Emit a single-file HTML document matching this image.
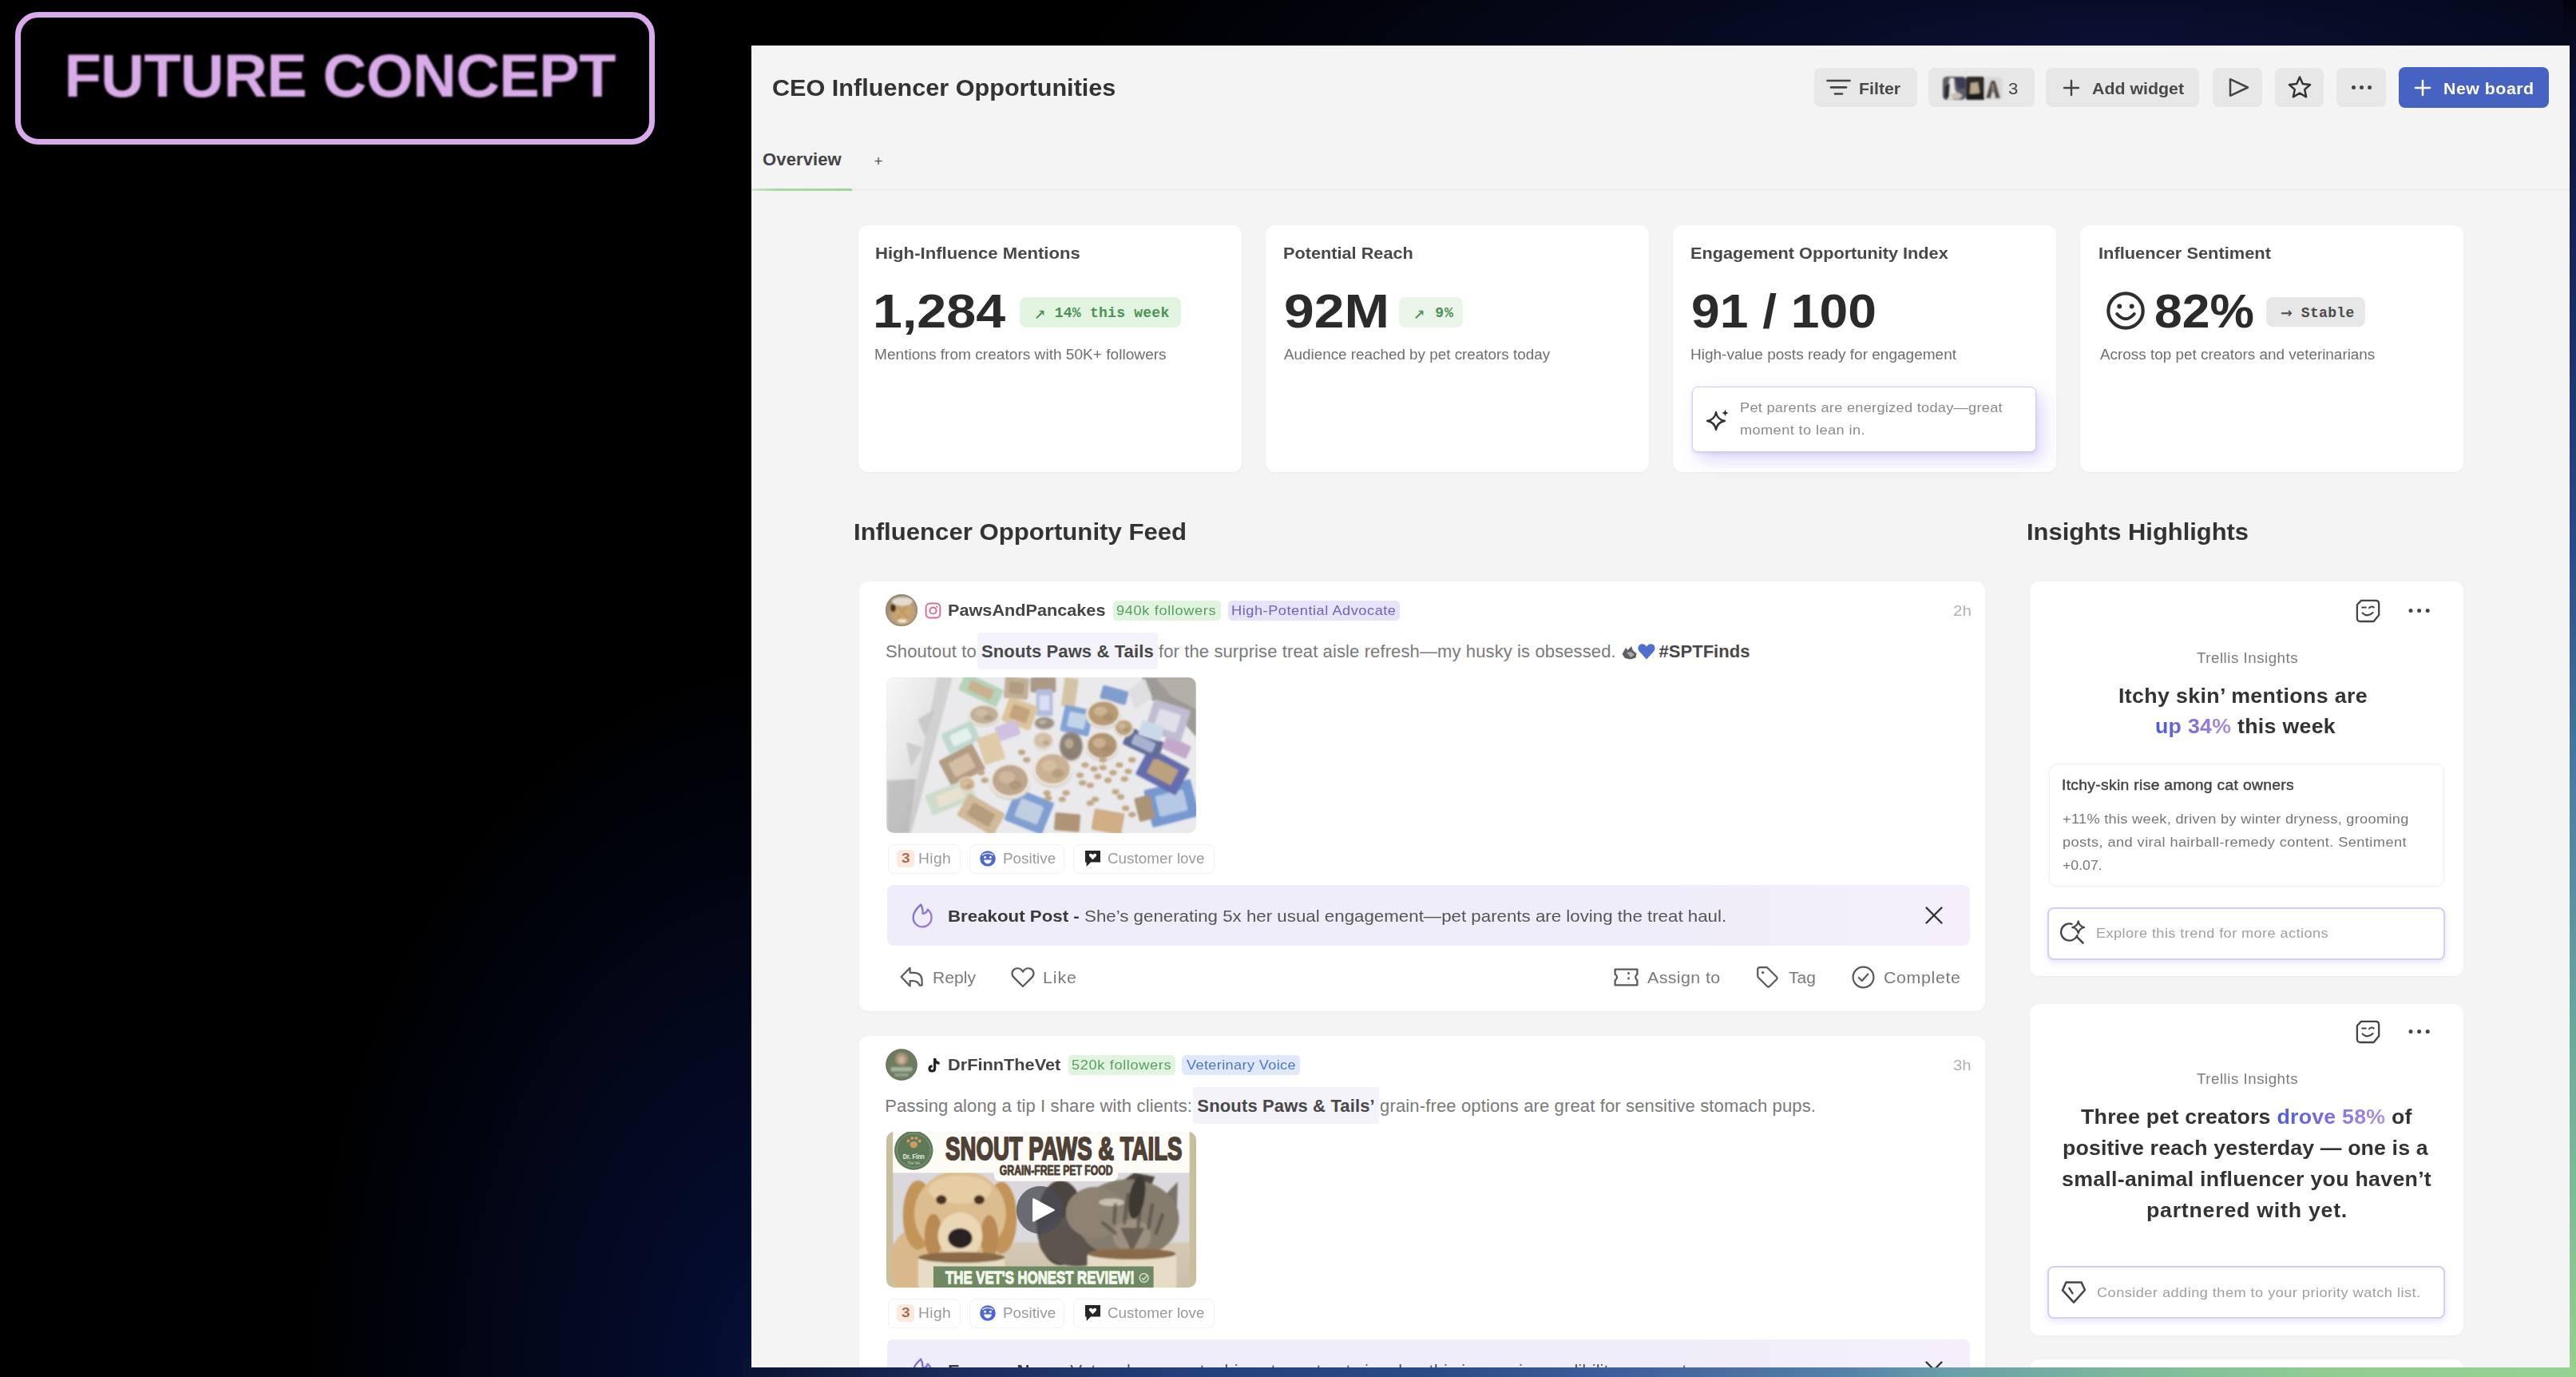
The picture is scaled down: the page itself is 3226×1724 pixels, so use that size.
<!DOCTYPE html>
<html lang="en"><head><meta charset="utf-8"><title>CEO Influencer Opportunities</title>
<style>
html,body{margin:0;padding:0;background:#000;}
html{width:3226px;height:1724px;overflow:hidden;}
body{width:3226px;height:1724px;position:relative;overflow:hidden;font-family:"Liberation Sans",sans-serif;}
.t{position:absolute;white-space:nowrap;}
b{font-weight:bold;}
svg{overflow:visible;}
.card{position:absolute;background:#fff;border-radius:12px;box-shadow:0 1px 3px rgba(0,0,0,.04);}
.btn{position:absolute;background:#e7e7e7;border-radius:8px;}
.chip{position:absolute;background:#fff;border:1px solid #f1f1f1;border-radius:8px;box-sizing:border-box;}
.pill{position:absolute;border-radius:5px;}
</style></head>
<body>
<div style="position:absolute;left:0px;top:0px;width:3226px;height:1724px;background:radial-gradient(ellipse 1300px 260px at 2650px 70px,#0b1136 0%,rgba(11,17,54,0) 100%),radial-gradient(ellipse 620px 900px at 1000px 1724px,#06103a 0%,rgba(6,16,58,0) 100%),#000;"></div>
<div style="position:absolute;left:930px;top:1700px;width:2296px;height:24px;background:linear-gradient(90deg,#0a1230 0%,#1c2c5c 12%,#24407c 25%,#2c4a86 38%,#3f5f9c 48%,#5580a8 60%,#6a9fa8 66%,#80bc9c 77%,#90cc92 86%,#98d290 100%);"></div>
<div style="position:absolute;left:3210px;top:0px;width:16px;height:1712px;background:linear-gradient(180deg,#02030c 0%,#0a1030 6%,#1a2e6a 24%,#2a4a8a 40%,#4a80a0 58%,#6aaa9c 76%,#96cf8e 100%);"></div>
<div style="position:absolute;left:18.5px;top:14.5px;width:801px;height:166px;box-sizing:border-box;border:7.5px solid #d9aaeb;border-radius:29px;background:#000;filter:blur(0.7px);"></div>
<div class="t" style="left:80.4px;top:57.2px;font:bold 76px/1 'Liberation Sans',sans-serif;color:#d9abe9;letter-spacing:-0.761px;filter:blur(0.8px);">FUTURE CONCEPT</div>
<div style="position:absolute;left:0;top:0;width:3226px;height:1724px;clip-path:inset(57px 8px 12px 941px);overflow:hidden;"><div style="position:absolute;left:0;top:0;width:3226px;height:1724px;overflow:hidden;filter:blur(0.7px);">
<div style="position:absolute;left:941px;top:57px;width:2277px;height:1655px;background:#f4f4f4;"></div>
<div class="t" style="left:967.3px;top:95.5px;font:bold 29px/1 'Liberation Sans',sans-serif;color:#333;transform:scaleX(1.0558);transform-origin:0 0;">CEO Influencer Opportunities</div>
<div class="btn" style="left:2272px;top:85px;width:128.5px;height:49px;"></div>
<div class="btn" style="left:2415px;top:85px;width:133px;height:49px;"></div>
<div class="btn" style="left:2561.5px;top:85px;width:192.0px;height:49px;"></div>
<div class="btn" style="left:2771px;top:85px;width:61.5px;height:49px;"></div>
<div class="btn" style="left:2848.5px;top:85px;width:61.5px;height:49px;"></div>
<div class="btn" style="left:2926px;top:85px;width:62px;height:49px;"></div>
<div class="btn" style="left:3003.5px;top:84px;width:188.5px;height:51px;background:#4663c2;"></div>
<svg style="position:absolute;left:2286px;top:96px;" width="34" height="26" viewBox="0 0 34 26"><g stroke="#444" stroke-width="2.6" stroke-linecap="round"><line x1="2.5" y1="5" x2="30.5" y2="5"/><line x1="7" y1="13.4" x2="26" y2="13.4"/><line x1="12" y1="21.5" x2="21" y2="21.5"/></g></svg>
<div class="t" style="left:2328.2px;top:100.7px;font:bold 20px/1 'Liberation Sans',sans-serif;color:#484848;transform:scaleX(1.0663);transform-origin:0 0;">Filter</div>
<svg style="position:absolute;left:2433px;top:95.5px;" width="75" height="29" viewBox="0 0 75 29"><defs><filter id="hb" x="-10%" y="-10%" width="120%" height="120%"><feGaussianBlur stdDeviation="1.1"/></filter></defs><g filter="url(#hb)"><rect x="0" y="0" width="29" height="29" rx="5" fill="#5d5d6b"/><path d="M9 2 L14 2 L15 16 L22 27 L7 29 L4 22 Z" fill="#e6e4e2"/><path d="M14 1 H28 V14 L20 16 Z" fill="#3a3d55"/><path d="M3 12 L9 8 L8 26 L2 28 Z" fill="#2a2a33"/><ellipse cx="17" cy="24" rx="7" ry="4" fill="#cbbfae"/><rect x="29" y="0" width="23" height="29" rx="3" fill="#2f2b28"/><path d="M35 8 L44 7 L46 20 L40 26 L34 21 Z" fill="#b7a88c"/><path d="M30 22 L52 20 V29 H30 Z" fill="#1e1b1a"/><rect x="52" y="0" width="23" height="29" rx="5" fill="#d9d9d9"/><path d="M60 6 Q63 3 66 6 L72 27 H66 L63 14 L60 27 H54 Z" fill="#4f4a46"/><path d="M61 9 L64 9 L65 20 L61 20 Z" fill="#8d7f70"/></g></svg>
<div class="t" style="left:2515.2px;top:100.9px;font:20px/1 'Liberation Sans',sans-serif;color:#444;transform:scaleX(1.1071);transform-origin:0 0;">3</div>
<svg style="position:absolute;left:2583.5px;top:100px;" width="20" height="20" viewBox="0 0 20 20"><g stroke="#444" stroke-width="2.4" stroke-linecap="round"><line x1="10" y1="1" x2="10" y2="19"/><line x1="1" y1="10" x2="19" y2="10"/></g></svg>
<div class="t" style="left:2620.2px;top:100.7px;font:bold 20px/1 'Liberation Sans',sans-serif;color:#484848;transform:scaleX(1.0680);transform-origin:0 0;">Add widget</div>
<svg style="position:absolute;left:2789px;top:95px;" width="30" height="29" viewBox="0 0 30 29"><path d="M4 4.2 L26 14.5 L4 24.8 Z" fill="none" stroke="#444" stroke-width="2.5" stroke-linejoin="round"/></svg>
<svg style="position:absolute;left:2865px;top:94px;" width="30" height="30" viewBox="0 0 30 30"><path d="M15 2.5 L18.8 11 L28 12 L21.2 18.2 L23.1 27.3 L15 22.7 L6.9 27.3 L8.8 18.2 L2 12 L11.2 11 Z" fill="none" stroke="#333" stroke-width="2.5" stroke-linejoin="round"/></svg>
<svg style="position:absolute;left:2944px;top:105px;" width="28" height="9" viewBox="0 0 28 9"><circle cx="3.5" cy="4.5" r="2.5" fill="#444"/><circle cx="13.5" cy="4.5" r="2.5" fill="#444"/><circle cx="23.5" cy="4.5" r="2.5" fill="#444"/></svg>
<svg style="position:absolute;left:3024px;top:100px;" width="20" height="20" viewBox="0 0 20 20"><g stroke="#fff" stroke-width="2.6" stroke-linecap="round"><line x1="10" y1="1" x2="10" y2="19"/><line x1="1" y1="10" x2="19" y2="10"/></g></svg>
<div class="t" style="left:3060.3px;top:100.7px;font:bold 20px/1 'Liberation Sans',sans-serif;color:#fff;letter-spacing:0.436px;transform:scaleX(1.0700);transform-origin:0 0;">New board</div>
<div style="position:absolute;left:941px;top:236.5px;width:2277px;height:1.5px;background:#e6e6e6;"></div>
<div style="position:absolute;left:941px;top:235.7px;width:126px;height:3px;background:linear-gradient(90deg,#cfe8cc,#a6daa2 25%,#9ed59a);"></div>
<div class="t" style="left:955.1px;top:189.4px;font:bold 22px/1 'Liberation Sans',sans-serif;color:#444;letter-spacing:0.102px;">Overview</div>
<div class="t" style="left:1094.5px;top:191.9px;font:19px/1 'Liberation Sans',sans-serif;color:#555;">+</div>
<div class="card" style="left:1074.5px;top:281.5px;width:480px;height:309.5px;"></div>
<div class="card" style="left:1584.5px;top:281.5px;width:480px;height:309.5px;"></div>
<div class="card" style="left:2094.5px;top:281.5px;width:480px;height:309.5px;"></div>
<div class="card" style="left:2604.5px;top:281.5px;width:480px;height:309.5px;"></div>
<div class="t" style="left:1095.5px;top:306.2px;font:bold 21px/1 'Liberation Sans',sans-serif;color:#484848;transform:scaleX(1.0531);transform-origin:0 0;">High-Influence Mentions</div>
<div class="t" style="left:1606.5px;top:306.2px;font:bold 21px/1 'Liberation Sans',sans-serif;color:#484848;transform:scaleX(1.0333);transform-origin:0 0;">Potential Reach</div>
<div class="t" style="left:2117.3px;top:306.2px;font:bold 21px/1 'Liberation Sans',sans-serif;color:#484848;transform:scaleX(1.0320);transform-origin:0 0;">Engagement Opportunity Index</div>
<div class="t" style="left:2628.3px;top:306.2px;font:bold 21px/1 'Liberation Sans',sans-serif;color:#484848;transform:scaleX(1.0396);transform-origin:0 0;">Influencer Sentiment</div>
<div class="t" style="left:1092.8px;top:360.2px;font:bold 60px/1 'Liberation Sans',sans-serif;color:#2b2b2b;transform:scaleX(1.1064);transform-origin:0 0;">1,284</div>
<div class="t" style="left:1607.6px;top:360.2px;font:bold 60px/1 'Liberation Sans',sans-serif;color:#2b2b2b;transform:scaleX(1.1299);transform-origin:0 0;">92M</div>
<div class="t" style="left:2117.8px;top:360.2px;font:bold 60px/1 'Liberation Sans',sans-serif;color:#2b2b2b;transform:scaleX(1.0691);transform-origin:0 0;">91 / 100</div>
<div class="t" style="left:2698.0px;top:360.2px;font:bold 60px/1 'Liberation Sans',sans-serif;color:#2b2b2b;transform:scaleX(1.0402);transform-origin:0 0;">82%</div>
<div class="pill" style="left:1277px;top:371.5px;width:201.5px;height:38.5px;background:#e2f5e0;border-radius:8px;"></div>
<div class="pill" style="left:1752px;top:371.5px;width:80px;height:38.5px;background:#ebf4e9;border-radius:8px;"></div>
<div class="pill" style="left:2838px;top:371.5px;width:124px;height:37px;background:#e6e7e6;border-radius:8px;"></div>
<div class="t" style="left:1295.0px;top:383.2px;font:bold 18px/1 'Liberation Mono',monospace;color:#4a9155;letter-spacing:0.252px;"><span style="font:24px/0 'DejaVu Sans Mono',monospace;position:relative;top:1.5px">↗</span> 14% this week</div>
<div class="t" style="left:1770.0px;top:383.2px;font:bold 18px/1 'Liberation Mono',monospace;color:#4a9155;letter-spacing:0.944px;"><span style="font:24px/0 'DejaVu Sans Mono',monospace;position:relative;top:1.5px">↗</span> 9%</div>
<div class="t" style="left:2855.9px;top:383.2px;font:bold 18px/1 'Liberation Mono',monospace;color:#4a4a4a;letter-spacing:0.324px;"><span style="font:24px/0 'DejaVu Sans Mono',monospace;position:relative;top:1.5px">→</span> Stable</div>
<div class="t" style="left:1095.4px;top:434.8px;font:18px/1 'Liberation Sans',sans-serif;color:#6e6e6e;transform:scaleX(1.0610);transform-origin:0 0;">Mentions from creators with 50K+ followers</div>
<div class="t" style="left:1608.0px;top:434.8px;font:18px/1 'Liberation Sans',sans-serif;color:#6e6e6e;transform:scaleX(1.0467);transform-origin:0 0;">Audience reached by pet creators today</div>
<div class="t" style="left:2117.1px;top:434.8px;font:18px/1 'Liberation Sans',sans-serif;color:#6e6e6e;transform:scaleX(1.0565);transform-origin:0 0;">High-value posts ready for engagement</div>
<div class="t" style="left:2630.0px;top:434.8px;font:18px/1 'Liberation Sans',sans-serif;color:#6e6e6e;transform:scaleX(1.0492);transform-origin:0 0;">Across top pet creators and veterinarians</div>
<svg style="position:absolute;left:2637.5px;top:365px;" width="48" height="48" viewBox="0 0 48 48"><circle cx="24" cy="24" r="21.7" fill="none" stroke="#2f2f2f" stroke-width="4.2"/><circle cx="16.3" cy="18.5" r="2.9" fill="#2f2f2f"/><circle cx="31.7" cy="18.5" r="2.9" fill="#2f2f2f"/><path d="M13.2 28 Q24 40.5 34.8 28" fill="none" stroke="#2f2f2f" stroke-width="4" stroke-linecap="round"/></svg>
<div style="position:absolute;left:2118.7px;top:483.5px;width:431.5px;height:82.5px;box-sizing:border-box;border:1.5px solid #cfcbf0;border-radius:7px;background:#fff;box-shadow:8px 10px 22px rgba(150,120,235,.30),0 2px 4px rgba(120,110,200,.18);"></div>
<svg style="position:absolute;left:2135px;top:510px;" width="32" height="32" viewBox="0 0 32 32"><path d="M14 6 Q15.5 15.5 25 17 Q15.5 18.5 14 28 Q12.5 18.5 3 17 Q12.5 15.5 14 6 Z" fill="none" stroke="#333" stroke-width="2.3" stroke-linejoin="round"/><path d="M25.5 2.5 Q26 6.5 30 7 Q26 7.5 25.5 11.5 Q25 7.5 21 7 Q25 6.5 25.5 2.5 Z" fill="#333"/></svg>
<div class="t" style="left:2178.5px;top:502.2px;font:17px/1 'Liberation Sans',sans-serif;color:#8a8a8a;letter-spacing:0.262px;transform:scaleX(1.0700);transform-origin:0 0;">Pet parents are energized today—great</div>
<div class="t" style="left:2178.8px;top:530.4px;font:17px/1 'Liberation Sans',sans-serif;color:#8a8a8a;letter-spacing:0.375px;transform:scaleX(1.0700);transform-origin:0 0;">moment to lean in.</div>
<div class="t" style="left:1069.4px;top:651.1px;font:bold 30px/1 'Liberation Sans',sans-serif;color:#333;transform:scaleX(1.0384);transform-origin:0 0;">Influencer Opportunity Feed</div>
<div class="t" style="left:2537.6px;top:651.1px;font:bold 30px/1 'Liberation Sans',sans-serif;color:#333;transform:scaleX(1.0298);transform-origin:0 0;">Insights Highlights</div>
<div class="card" style="left:1076px;top:728px;width:1410px;height:538px;"></div>
<svg style="position:absolute;left:1108.5px;top:744.2px;" width="40" height="40" viewBox="0 0 40 40"><defs><radialGradient id="av1" cx=".55" cy=".6" r=".6"><stop offset="0" stop-color="#d3ab72"/><stop offset=".55" stop-color="#c0a076"/><stop offset="1" stop-color="#948773"/></radialGradient><filter id="avb"><feGaussianBlur stdDeviation="1"/></filter></defs><circle cx="20" cy="20" r="20" fill="url(#av1)"/><g filter="url(#avb)"><ellipse cx="21" cy="9" rx="13" ry="5.5" fill="#ece7df" opacity=".85"/><ellipse cx="9.5" cy="17" rx="3.2" ry="5" fill="#4b2f17"/><ellipse cx="21" cy="33.5" rx="6" ry="2.4" fill="#f1e7d2"/><path d="M14 14 L28 30 M27 14 L15 31" stroke="#b48c58" stroke-width="2.5" opacity=".6"/></g><circle cx="20" cy="20" r="19.3" fill="none" stroke="#8e8579" stroke-width="1.4" opacity=".7"/></svg>
<svg style="position:absolute;left:1157.5px;top:754.2px;" width="21" height="21" viewBox="0 0 21 21"><rect x="1.6" y="1.6" width="17.8" height="17.8" rx="5" fill="none" stroke="#d4708f" stroke-width="2"/><circle cx="10.5" cy="10.5" r="4.1" fill="none" stroke="#d4708f" stroke-width="2"/><circle cx="15.4" cy="5.6" r="1.2" fill="#d4708f"/></svg>
<div class="t" style="left:1187.0px;top:753.2px;font:bold 21px/1 'Liberation Sans',sans-serif;color:#444;transform:scaleX(1.0313);transform-origin:0 0;">PawsAndPancakes</div>
<div class="pill" style="left:1394.4px;top:752px;width:134.19999999999982px;height:24.5px;background:#e1f4df;"></div>
<div class="t" style="left:1398.1px;top:756.0px;font:17px/1 'Liberation Sans',sans-serif;color:#56a062;letter-spacing:0.599px;transform:scaleX(1.0700);transform-origin:0 0;">940k followers</div>
<div class="pill" style="left:1537.6px;top:752px;width:215.20000000000005px;height:24.5px;background:#e7e4fa;"></div>
<div class="t" style="left:1541.8px;top:756.0px;font:17px/1 'Liberation Sans',sans-serif;color:#6c64bd;letter-spacing:0.503px;transform:scaleX(1.0700);transform-origin:0 0;">High-Potential Advocate</div>
<div class="t" style="left:2445.5px;top:756.3px;font:18px/1 'Liberation Sans',sans-serif;color:#b0b0b0;transform:scaleX(1.1416);transform-origin:0 0;">2h</div>
<div class="t" style="left:1109.0px;top:805.2px;font:22px/1 'Liberation Sans',sans-serif;color:#7a7a7a;letter-spacing:0.115px;">Shoutout to <b style="color:#484848;background:#f4f2fb;padding:11px 5px 10px;margin:0 -5px;border-radius:4px;">Snouts Paws &amp; Tails</b> for the surprise treat aisle refresh—my husky is obsessed.</div>
<div class="t" style="left:2077.6px;top:805.2px;font:22px/1 'Liberation Sans',sans-serif;color:#7a7a7a;letter-spacing:0.011px;"><b style="color:#484848">#SPTFinds</b></div>
<svg style="position:absolute;left:2030px;top:806px" width="44" height="22" viewBox="0 0 44 22"><path d="M1.5 13 L6 5 L8.5 8 L13 3 L15 8.5 L19.5 12 L18.5 17.5 L12 19.5 L5 18 Z" fill="#5f6066"/><path d="M7 11 L12 10 L17 13.5 L12.5 17 Z" fill="#a9abb0"/><path d="M32 19.5 L23 9.6 C20 6.2 21.6 0.8 25.8 0.2 C28.4 -0.2 30.8 1.2 32 3.8 C33.2 1.2 35.6 -0.2 38.2 0.2 C42.4 0.8 44 6.2 41 9.6 Z" fill="#4f70cc"/></svg>
<div style="position:absolute;left:1109.5px;top:848px;width:388px;height:195px;border-radius:10px;overflow:hidden;background:#ddd;"><svg width="388" height="195" viewBox="55 50 2440 1225" preserveAspectRatio="none"><defs><linearGradient id="i1a" x1="0" y1="0" x2="1" y2="1"><stop offset="0" stop-color="#f7f7f7"/><stop offset=".55" stop-color="#dcdcdc"/><stop offset="1" stop-color="#a9a9a9"/></linearGradient><filter id="i1b" x="-5%" y="-5%" width="110%" height="110%"><feGaussianBlur stdDeviation="7"/></filter></defs><rect x="55" y="50" width="2440" height="1225" fill="#e7e7ea"/><g filter="url(#i1b)"><polygon points="55,50 575,50 250,1275 55,1275" fill="url(#i1a)"/><polygon points="300,380 440,300 360,520" fill="#a8a8a8" opacity=".55"/><polygon points="210,560 340,600 250,760" fill="#a9a9a9" opacity=".5"/><polygon points="60,860 290,850 230,1275 60,1275" fill="#9c9c9c" opacity=".6"/><polygon points="455,50 575,50 300,1100 240,1275 215,1275" fill="#b9b9b9" opacity=".55"/><polygon points="2070,50 2495,50 2495,520 2330,330 2080,190" fill="#8f8a84"/><polygon points="2180,60 2495,60 2495,300 2300,200" fill="#a7a39c"/><polygon points="1960,150 2090,60 2150,210 2010,300" fill="#d9d9dc"/><g transform="rotate(25 800 150)"><rect x="635.0" y="75.0" width="330" height="150" rx="14" fill="#a8ccae"/><rect x="701.0" y="108.0" width="198.0" height="84.00000000000001" rx="16" fill="#c2a57e"/></g><g transform="rotate(5 1080 135)"><rect x="985.0" y="50.0" width="190" height="170" rx="14" fill="#b7a386"/><rect x="1023.0" y="87.4" width="114.0" height="95.2" rx="16" fill="#a58c6c"/></g><g transform="rotate(0 1290 110)"><rect x="1190.0" y="50.0" width="200" height="120" rx="14" fill="#9f8a76"/></g><g transform="rotate(8 1500 170)"><rect x="1445.0" y="55.0" width="110" height="230" rx="14" fill="#cdbb98"/></g><g transform="rotate(0 1300 250)"><rect x="1235.0" y="145.0" width="130" height="210" rx="14" fill="#a6b4da"/><rect x="1261.0" y="191.2" width="78.0" height="117.60000000000001" rx="16" fill="#d5daf0"/></g><g transform="rotate(12 1555 390)"><rect x="1440.0" y="285.0" width="230" height="210" rx="14" fill="#6e93cf"/><rect x="1486.0" y="331.2" width="138.0" height="117.60000000000001" rx="16" fill="#b9cde6"/></g><g transform="rotate(15 1850 190)"><rect x="1745.0" y="135.0" width="210" height="110" rx="14" fill="#6a8fc6"/></g><g transform="rotate(20 1105 335)"><rect x="985.0" y="235.0" width="240" height="200" rx="14" fill="#d6ba8e"/><rect x="1033.0" y="279.0" width="144.0" height="112.00000000000001" rx="16" fill="#b99466"/></g><g transform="rotate(-25 640 520)"><rect x="505.0" y="435.0" width="270" height="170" rx="14" fill="#b5d3c8"/><rect x="559.0" y="472.4" width="162.0" height="95.2" rx="16" fill="#dfeee8"/></g><g transform="rotate(-20 1010 470)"><rect x="920.0" y="410.0" width="180" height="120" rx="14" fill="#cbb6dc"/></g><g transform="rotate(-28 650 740)"><rect x="500.0" y="625.0" width="300" height="230" rx="14" fill="#a78c70"/><rect x="560.0" y="675.6" width="180.0" height="128.8" rx="16" fill="#cbb397"/></g><g transform="rotate(-18 880 610)"><rect x="795.0" y="500.0" width="170" height="220" rx="14" fill="#dac39a"/></g><g transform="rotate(-22 560 990)"><rect x="375.0" y="905.0" width="370" height="170" rx="14" fill="#c4d6c2"/><rect x="449.0" y="942.4" width="222.0" height="95.2" rx="16" fill="#e5dcc8"/></g><g transform="rotate(30 800 1130)"><rect x="635.0" y="1030.0" width="330" height="200" rx="14" fill="#c9af89"/><rect x="701.0" y="1074.0" width="198.0" height="112.00000000000001" rx="16" fill="#a98d68"/></g><g transform="rotate(22 1180 1105)"><rect x="1020.0" y="970.0" width="320" height="270" rx="14" fill="#6b90cc"/><rect x="1084.0" y="1029.4" width="192.0" height="151.20000000000002" rx="16" fill="#b5c6de"/></g><g transform="rotate(-14 2300 1040)"><rect x="2110.0" y="890.0" width="380" height="300" rx="14" fill="#5f88c9"/><rect x="2186.0" y="956.0" width="228.0" height="168.00000000000003" rx="16" fill="#a9c0e0"/></g><g transform="rotate(-14 2090 1080)"><rect x="2025.0" y="985.0" width="130" height="190" rx="14" fill="#9c8260"/></g><g transform="rotate(28 2230 790)"><rect x="2050.0" y="670.0" width="360" height="240" rx="14" fill="#4b56a0"/><rect x="2122.0" y="722.8" width="216.0" height="134.4" rx="16" fill="#b29268"/></g><g transform="rotate(25 2080 570)"><rect x="1930.0" y="495.0" width="300" height="150" rx="14" fill="#4a5686"/><rect x="1990.0" y="528.0" width="180.0" height="84.00000000000001" rx="16" fill="#9aa6c8"/></g><g transform="rotate(25 2340 600)"><rect x="2235.0" y="545.0" width="210" height="110" rx="14" fill="#b99bc4"/></g><g transform="rotate(18 2270 390)"><rect x="2120.0" y="260.0" width="300" height="260" rx="14" fill="#b7b2ca"/><rect x="2180.0" y="317.2" width="180.0" height="145.60000000000002" rx="16" fill="#dcdae6"/></g><g transform="rotate(18 2140 470)"><rect x="2050.0" y="410.0" width="180" height="120" rx="14" fill="#c2d3e6"/></g><g transform="rotate(10 1800 1185)"><rect x="1680.0" y="1100.0" width="240" height="170" rx="14" fill="#c9a173"/></g><g transform="rotate(5 1480 1190)"><rect x="1380.0" y="1120.0" width="200" height="140" rx="14" fill="#a38362"/></g><ellipse cx="1030" cy="874.0" rx="163.79999999999998" ry="140.868" fill="#cfcac2"/><ellipse cx="1030" cy="860" rx="161.0" ry="138.45999999999998" fill="#ece6da"/><ellipse cx="1030" cy="860" rx="140" ry="120.39999999999999" fill="#b3987a"/><ellipse cx="1002.0" cy="835.92" rx="63.0" ry="48.16" fill="#d8bf9c" opacity=".55"/><ellipse cx="1072.0" cy="896.12" rx="49.0" ry="36.12" fill="#8f7352" opacity=".45"/><ellipse cx="1365" cy="783.5" rx="157.95" ry="135.837" fill="#cfcac2"/><ellipse cx="1365" cy="770" rx="155.25" ry="133.515" fill="#ece6da"/><ellipse cx="1365" cy="770" rx="135" ry="116.1" fill="#c2a484"/><ellipse cx="1338.0" cy="746.78" rx="60.75" ry="46.44" fill="#d8bf9c" opacity=".55"/><ellipse cx="1405.5" cy="804.83" rx="47.25" ry="34.83" fill="#8f7352" opacity=".45"/><ellipse cx="1755" cy="596.5" rx="134.54999999999998" ry="115.71299999999998" fill="#cfcac2"/><ellipse cx="1755" cy="585" rx="132.25" ry="113.73499999999999" fill="#ece6da"/><ellipse cx="1755" cy="585" rx="115" ry="98.89999999999999" fill="#a4835c"/><ellipse cx="1732.0" cy="565.22" rx="51.75" ry="39.56" fill="#d8bf9c" opacity=".55"/><ellipse cx="1789.5" cy="614.67" rx="40.25" ry="29.669999999999995" fill="#8f7352" opacity=".45"/><ellipse cx="1290" cy="552.2" rx="84.24" ry="72.4464" fill="#cfcac2"/><ellipse cx="1290" cy="545" rx="82.8" ry="71.208" fill="#ece6da"/><ellipse cx="1290" cy="545" rx="72" ry="61.92" fill="#c8b699"/><ellipse cx="1275.6" cy="532.616" rx="32.4" ry="24.768" fill="#d8bf9c" opacity=".55"/><ellipse cx="1311.6" cy="563.576" rx="25.2" ry="18.576" fill="#8f7352" opacity=".45"/><ellipse cx="1925" cy="451.8" rx="79.56" ry="68.4216" fill="#cfcac2"/><ellipse cx="1925" cy="445" rx="78.19999999999999" ry="67.252" fill="#ece6da"/><ellipse cx="1925" cy="445" rx="68" ry="58.48" fill="#b4936c"/><ellipse cx="1911.4" cy="433.304" rx="30.6" ry="23.392" fill="#d8bf9c" opacity=".55"/><ellipse cx="1945.4" cy="462.544" rx="23.799999999999997" ry="17.543999999999997" fill="#8f7352" opacity=".45"/><ellipse cx="825" cy="356.0" rx="128.7" ry="84.24" fill="#cfcac2"/><ellipse cx="825" cy="345" rx="126.49999999999999" ry="82.8" fill="#ece6da"/><ellipse cx="825" cy="345" rx="110" ry="72" fill="#b7a389"/><ellipse cx="803.0" cy="330.6" rx="49.5" ry="28.8" fill="#d8bf9c" opacity=".55"/><ellipse cx="858.0" cy="366.6" rx="38.5" ry="21.599999999999998" fill="#8f7352" opacity=".45"/><ellipse cx="1765" cy="347.0" rx="140.39999999999998" ry="111.14999999999999" fill="#cfcac2"/><ellipse cx="1765" cy="335" rx="138.0" ry="109.24999999999999" fill="#ece6da"/><ellipse cx="1765" cy="335" rx="120" ry="95" fill="#ad8a5e"/><ellipse cx="1741.0" cy="316.0" rx="54.0" ry="38.0" fill="#d8bf9c" opacity=".55"/><ellipse cx="1801.0" cy="363.5" rx="42.0" ry="28.5" fill="#8f7352" opacity=".45"/><ellipse cx="1510" cy="598.0" rx="93.6" ry="117.0" fill="#cfcac2"/><ellipse cx="1510" cy="590" rx="92.0" ry="114.99999999999999" fill="#8d8278"/><ellipse cx="1510" cy="590" rx="80" ry="100" fill="#786a5e"/><ellipse cx="1494.0" cy="570.0" rx="36.0" ry="40.0" fill="#d8bf9c" opacity=".55"/><ellipse cx="1534.0" cy="620.0" rx="28.0" ry="30.0" fill="#8f7352" opacity=".45"/><ellipse cx="1300" cy="416.8" rx="79.56" ry="49.14" fill="#cfcac2"/><ellipse cx="1300" cy="410" rx="78.19999999999999" ry="48.3" fill="#a09a90"/><ellipse cx="1300" cy="410" rx="68" ry="42" fill="#8b8072"/><ellipse cx="1286.4" cy="401.6" rx="30.6" ry="16.8" fill="#d8bf9c" opacity=".55"/><ellipse cx="1320.4" cy="422.6" rx="23.799999999999997" ry="12.6" fill="#8f7352" opacity=".45"/><ellipse cx="690" cy="896.0" rx="70.19999999999999" ry="58.5" fill="#cfcac2"/><ellipse cx="690" cy="890" rx="69.0" ry="57.49999999999999" fill="#ece6da"/><ellipse cx="690" cy="890" rx="60" ry="50" fill="#c8a878"/><ellipse cx="678.0" cy="880.0" rx="27.0" ry="20.0" fill="#d8bf9c" opacity=".55"/><ellipse cx="708.0" cy="905.0" rx="21.0" ry="15.0" fill="#8f7352" opacity=".45"/><ellipse cx="1620" cy="740" rx="30" ry="21.599999999999998" fill="#b79a70"/><ellipse cx="1690" cy="770" rx="30" ry="21.599999999999998" fill="#b79a70"/><ellipse cx="1760" cy="760" rx="30" ry="21.599999999999998" fill="#b79a70"/><ellipse cx="1840" cy="800" rx="30" ry="21.599999999999998" fill="#b79a70"/><ellipse cx="1720" cy="830" rx="30" ry="21.599999999999998" fill="#b79a70"/><ellipse cx="1600" cy="880" rx="30" ry="21.599999999999998" fill="#b79a70"/><ellipse cx="1660" cy="900" rx="30" ry="21.599999999999998" fill="#b79a70"/><ellipse cx="1580" cy="820" rx="30" ry="21.599999999999998" fill="#b79a70"/><ellipse cx="1800" cy="860" rx="30" ry="21.599999999999998" fill="#b79a70"/><ellipse cx="1890" cy="740" rx="30" ry="21.599999999999998" fill="#b79a70"/><ellipse cx="1960" cy="790" rx="30" ry="21.599999999999998" fill="#b79a70"/><ellipse cx="1990" cy="700" rx="30" ry="21.599999999999998" fill="#b79a70"/><ellipse cx="1930" cy="850" rx="30" ry="21.599999999999998" fill="#b79a70"/><ellipse cx="1860" cy="950" rx="30" ry="21.599999999999998" fill="#b79a70"/><ellipse cx="1900" cy="990" rx="30" ry="21.599999999999998" fill="#b79a70"/><ellipse cx="1940" cy="1080" rx="30" ry="21.599999999999998" fill="#b79a70"/><ellipse cx="1990" cy="1130" rx="30" ry="21.599999999999998" fill="#b79a70"/><ellipse cx="1700" cy="1010" rx="30" ry="21.599999999999998" fill="#b79a70"/><ellipse cx="1660" cy="1040" rx="30" ry="21.599999999999998" fill="#b79a70"/><ellipse cx="1320" cy="960" rx="30" ry="21.599999999999998" fill="#b79a70"/><ellipse cx="1470" cy="960" rx="30" ry="21.599999999999998" fill="#b79a70"/><ellipse cx="1440" cy="1010" rx="30" ry="21.599999999999998" fill="#b79a70"/><ellipse cx="1760" cy="700" rx="30" ry="21.599999999999998" fill="#b79a70"/><ellipse cx="1330" cy="1000" rx="30" ry="21.599999999999998" fill="#b79a70"/><ellipse cx="800" cy="800" rx="30" ry="21.599999999999998" fill="#b79a70"/><ellipse cx="830" cy="860" rx="30" ry="21.599999999999998" fill="#b79a70"/><ellipse cx="1120" cy="640" rx="30" ry="21.599999999999998" fill="#b79a70"/><ellipse cx="1160" cy="700" rx="30" ry="21.599999999999998" fill="#b79a70"/></g><rect x="55" y="50" width="2440" height="1225" fill="#fff" opacity=".14"/></svg></div>
<div class="chip" style="left:1111.5px;top:1056.5px;width:91.5px;height:37px;"></div>
<div class="chip" style="left:1213.5px;top:1056.5px;width:119.5px;height:37px;"></div>
<div class="chip" style="left:1344px;top:1056.5px;width:176.5px;height:37px;"></div>
<div style="position:absolute;left:1123px;top:1063.5px;width:21.5px;height:22.5px;background:#fbe9dd;border-radius:5px;"></div>
<div class="t" style="left:1128.6px;top:1067.1px;font:bold 16px/1 'Liberation Sans',sans-serif;color:#a36b50;transform:scaleX(1.1933);transform-origin:0 0;">3</div>
<div class="t" style="left:1150.4px;top:1065.6px;font:18px/1 'Liberation Sans',sans-serif;color:#9a9a9a;letter-spacing:0.376px;transform:scaleX(1.0700);transform-origin:0 0;">High</div>
<svg style="position:absolute;left:1227.3px;top:1064.8px;" width="20" height="20" viewBox="0 0 20 20"><circle cx="10" cy="10" r="9.8" fill="#5068cc"/><circle cx="6.6" cy="8.2" r="1.5" fill="#fff"/><circle cx="13.4" cy="8.2" r="1.5" fill="#fff"/><path d="M5.2 11.6 H14.8 Q14.2 16.4 10 16.4 Q5.8 16.4 5.2 11.6 Z" fill="#fff"/><path d="M3 5.6 Q10 1.2 17 5.6" stroke="#dfe5ff" stroke-width="1.4" fill="none"/></svg>
<div class="t" style="left:1256.1px;top:1065.6px;font:18px/1 'Liberation Sans',sans-serif;color:#9a9a9a;transform:scaleX(1.0501);transform-origin:0 0;">Positive</div>
<svg style="position:absolute;left:1357.5px;top:1063.5px;" width="21" height="22" viewBox="0 0 21 22"><path d="M1 1 H20 V15.5 H8 L2.6 21 V15.5 H1 Z" fill="#262626"/><path d="M10.5 12.2 L6.3 8 Q5 5.6 7.4 4.7 Q9.3 4.3 10.5 6.2 Q11.7 4.3 13.6 4.7 Q16 5.6 14.7 8 Z" fill="#fff"/></svg>
<div class="t" style="left:1387.0px;top:1065.6px;font:18px/1 'Liberation Sans',sans-serif;color:#9a9a9a;transform:scaleX(1.0469);transform-origin:0 0;">Customer love</div>
<div style="position:absolute;left:1111px;top:1108px;width:1356px;height:76px;background:linear-gradient(90deg,#eeedf9 0%,#efedf9 70%,#f4effb 100%);border-radius:8px;"></div>
<svg style="position:absolute;left:1141.5px;top:1130.5px;" width="27" height="31" viewBox="0 0 27 31"><defs><linearGradient id="fl0" x1="0" y1="0" x2="1" y2="1"><stop offset="0" stop-color="#6f6ad6"/><stop offset="1" stop-color="#a77ee0"/></linearGradient></defs><path d="M11.2 1.6 C7 5.2 1.6 10.2 1.6 17.6 C1.6 24.4 6.6 29.4 13 29.4 C19.6 29.4 24.6 24.4 24.6 17.8 C24.6 13.4 22.6 10 19.8 7.6 C19 10.6 16.6 12.6 13.6 12.8 C13.8 8.6 13 4.6 11.2 1.6 Z" fill="none" stroke="url(#fl0)" stroke-width="2.3" stroke-linejoin="round"/></svg>
<div class="t" style="left:1186.9px;top:1135.8px;font:21px/1 'Liberation Sans',sans-serif;color:#555;transform:scaleX(1.0619);transform-origin:0 0;"><b style="color:#3a3a3a">Breakout Post -</b> She’s generating 5x her usual engagement—pet parents are loving the treat haul.</div>
<svg style="position:absolute;left:2410.7px;top:1134.8px;" width="22" height="22" viewBox="0 0 22 22"><g stroke="#333" stroke-width="2.4" stroke-linecap="round"><line x1="1.5" y1="1.5" x2="20.5" y2="20.5"/><line x1="20.5" y1="1.5" x2="1.5" y2="20.5"/></g></svg>
<svg style="position:absolute;left:1127px;top:1209.5px;" width="30" height="27" viewBox="0 0 30 27"><path d="M12.6 1.8 L1.6 13 L12.6 24.4 V18.2 H16.5 Q22.5 18.2 24.6 23.6 H27.6 V18 Q27.6 7.8 17 7.8 H12.6 Z" fill="none" stroke="#5a5a5a" stroke-width="2.2" stroke-linejoin="round"/></svg>
<div class="t" style="left:1167.5px;top:1213.5px;font:20px/1 'Liberation Sans',sans-serif;color:#7a7a7a;transform:scaleX(1.0554);transform-origin:0 0;">Reply</div>
<svg style="position:absolute;left:1266px;top:1209.5px;" width="30" height="27" viewBox="0 0 30 27"><path d="M15 25 L3.6 13.6 C0.2 10.2 1.2 4.6 5.6 2.8 C9.2 1.4 13 3 15 6.6 C17 3 20.8 1.4 24.4 2.8 C28.8 4.6 29.8 10.2 26.4 13.6 Z" fill="none" stroke="#5a5a5a" stroke-width="2.3" stroke-linejoin="round"/></svg>
<div class="t" style="left:1305.6px;top:1213.5px;font:20px/1 'Liberation Sans',sans-serif;color:#7a7a7a;letter-spacing:0.821px;transform:scaleX(1.0700);transform-origin:0 0;">Like</div>
<svg style="position:absolute;left:2021px;top:1211.5px;" width="31" height="23" viewBox="0 0 31 23"><path d="M1.6 1.6 H29.4 V7.6 Q25 11.5 29.4 15.4 V21.4 H1.6 V15.4 Q6.6 11.5 1.6 7.6 Z" fill="none" stroke="#5a5a5a" stroke-width="2.3" stroke-linejoin="round"/><line x1="18.5" y1="5" x2="18.5" y2="18.5" stroke="#5a5a5a" stroke-width="2.3" stroke-dasharray="3 3.6"/></svg>
<div class="t" style="left:2062.8px;top:1213.5px;font:20px/1 'Liberation Sans',sans-serif;color:#7a7a7a;letter-spacing:0.364px;transform:scaleX(1.0700);transform-origin:0 0;">Assign to</div>
<svg style="position:absolute;left:2198.5px;top:1209px;" width="29" height="29" viewBox="0 0 29 29"><path d="M2.2 5 Q2.2 2.2 5 2.2 H12.6 Q14 2.2 15 3.2 L25.8 14 Q27.4 15.6 25.8 17.2 L17.2 25.8 Q15.6 27.4 14 25.8 L3.2 15 Q2.2 14 2.2 12.6 Z" fill="none" stroke="#5a5a5a" stroke-width="2.2" stroke-linejoin="round"/><circle cx="8.6" cy="8.6" r="1.7" fill="#5a5a5a"/></svg>
<div class="t" style="left:2239.9px;top:1213.5px;font:20px/1 'Liberation Sans',sans-serif;color:#7a7a7a;transform:scaleX(1.0488);transform-origin:0 0;">Tag</div>
<svg style="position:absolute;left:2318.5px;top:1208.5px;" width="29" height="29" viewBox="0 0 29 29"><circle cx="14.5" cy="14.5" r="12.9" fill="none" stroke="#5a5a5a" stroke-width="2.2"/><path d="M8.8 15 L12.8 19 L20.4 10.6" fill="none" stroke="#5a5a5a" stroke-width="2.3" stroke-linecap="round" stroke-linejoin="round"/></svg>
<div class="t" style="left:2358.7px;top:1213.5px;font:20px/1 'Liberation Sans',sans-serif;color:#7a7a7a;letter-spacing:0.592px;transform:scaleX(1.0700);transform-origin:0 0;">Complete</div>
<div class="card" style="left:1076px;top:1297px;width:1410px;height:538px;"></div>
<svg style="position:absolute;left:1108.5px;top:1313.2px;" width="40" height="40" viewBox="0 0 40 40"><circle cx="20" cy="20" r="19.6" fill="#6d7b5f"/><g filter="url(#avb)"><ellipse cx="20" cy="13" rx="8" ry="8" fill="#b3957d" opacity=".9"/><ellipse cx="20" cy="14" rx="4" ry="4.5" fill="#c9b39f"/><rect x="6.5" y="23" width="27" height="5.5" rx="2" fill="#a9b5a2"/><rect x="11" y="31" width="18" height="3.5" rx="1.5" fill="#97a491"/></g><circle cx="20" cy="20" r="19.2" fill="none" stroke="#5f6659" stroke-width="1.2" opacity=".7"/></svg>
<svg style="position:absolute;left:1157.5px;top:1323.2px;" width="21" height="21" viewBox="0 0 21 21"><path d="M11 2 H14.2 Q14.6 6 18.6 6.6 V9.8 Q16 9.8 14.2 8.4 V14.6 Q14.2 19.6 9.2 19.6 Q4.4 19.4 4.4 14.8 Q4.6 10.4 9.6 10.2 V13.4 Q7.6 13.4 7.6 14.8 Q7.6 16.4 9.2 16.4 Q11 16.4 11 14.4 Z" fill="#222"/></svg>
<div class="t" style="left:1186.9px;top:1322.2px;font:bold 21px/1 'Liberation Sans',sans-serif;color:#444;transform:scaleX(1.0352);transform-origin:0 0;">DrFinnTheVet</div>
<div class="pill" style="left:1338px;top:1321px;width:134.29999999999995px;height:24.5px;background:#e1f4df;"></div>
<div class="t" style="left:1341.9px;top:1325.0px;font:17px/1 'Liberation Sans',sans-serif;color:#56a062;letter-spacing:0.597px;transform:scaleX(1.0700);transform-origin:0 0;">520k followers</div>
<div class="pill" style="left:1480.4px;top:1321px;width:147.19999999999982px;height:24.5px;background:#dfe9fb;"></div>
<div class="t" style="left:1486.0px;top:1325.0px;font:17px/1 'Liberation Sans',sans-serif;color:#4d76c9;letter-spacing:0.320px;transform:scaleX(1.0700);transform-origin:0 0;">Veterinary Voice</div>
<div class="t" style="left:2445.7px;top:1325.3px;font:18px/1 'Liberation Sans',sans-serif;color:#b0b0b0;transform:scaleX(1.1278);transform-origin:0 0;">3h</div>
<div class="t" style="left:1108.2px;top:1374.2px;font:22px/1 'Liberation Sans',sans-serif;color:#7a7a7a;letter-spacing:0.142px;">Passing along a tip I share with clients: <b style="color:#484848;background:#f4f2fb;padding:11px 5px 10px;margin:0 -5px;border-radius:4px;">Snouts Paws &amp; Tails’</b> grain-free options are great for sensitive stomach pups.</div>

<div style="position:absolute;left:1109.5px;top:1417px;width:388px;height:195px;border-radius:10px;overflow:hidden;background:#ddd;"><svg width="388" height="195" viewBox="60 50 2435 1215" preserveAspectRatio="none"><defs><filter id="i2b" x="-5%" y="-5%" width="110%" height="110%"><feGaussianBlur stdDeviation="6"/></filter><linearGradient id="i2bg" x1="0" y1="0" x2="0" y2="1"><stop offset="0" stop-color="#d9d7dd"/><stop offset=".7" stop-color="#dcd9dc"/><stop offset=".72" stop-color="#d5c9b5"/><stop offset="1" stop-color="#cbbfa8"/></linearGradient></defs><rect x="60" y="50" width="2435" height="1215" fill="#c9bf9e"/><rect x="112" y="50" width="2330" height="1215" fill="url(#i2bg)"/><g filter="url(#i2b)"><ellipse cx="250" cy="1080" rx="160" ry="260" fill="#d9b98b"/><ellipse cx="310" cy="700" rx="120" ry="270" fill="#c39458"/><ellipse cx="965" cy="720" rx="120" ry="280" fill="#c39458"/><ellipse cx="640" cy="690" rx="360" ry="340" fill="#dcbd8f"/><ellipse cx="640" cy="500" rx="250" ry="110" fill="#e6cda4"/><ellipse cx="430" cy="860" rx="70" ry="170" fill="#b98a52"/><ellipse cx="870" cy="870" rx="70" ry="170" fill="#b98a52"/><ellipse cx="640" cy="860" rx="175" ry="180" fill="#ead7b6"/><ellipse cx="640" cy="880" rx="95" ry="78" fill="#2b2322"/><ellipse cx="492" cy="580" rx="42" ry="36" fill="#4a3020"/><ellipse cx="790" cy="580" rx="42" ry="36" fill="#4a3020"/><ellipse cx="1430" cy="760" rx="190" ry="330" fill="#4b4541"/><ellipse cx="1560" cy="900" rx="300" ry="200" fill="#5d554e"/><polygon points="1860,470 2010,370 2170,400 2080,620" fill="#4e4640"/><polygon points="2150,650 2350,440 2340,760" fill="#7b7167"/><ellipse cx="1960" cy="730" rx="400" ry="310" fill="#867b6e"/><ellipse cx="1700" cy="680" rx="230" ry="200" fill="#8e8273"/><ellipse cx="1830" cy="600" rx="100" ry="30" fill="#c9bfae"/><ellipse cx="2030" cy="560" rx="60" ry="170" fill="#3e3833" transform="rotate(10 2030 560)"/><ellipse cx="1990" cy="860" rx="150" ry="130" fill="#9c9080"/><polygon points="1900,800 2090,800 1990,990" fill="#6a5f54"/><g stroke="#3f3832" stroke-width="30" stroke-linecap="round" opacity=".45"><path d="M1960 540 L1930 760"/><path d="M2060 560 L2040 790"/><path d="M2150 620 L2120 800"/><path d="M1860 620 L1850 760"/><path d="M2230 700 L2180 840"/><path d="M1760 760 L1860 840"/></g><rect x="310" y="1025" width="680" height="250" rx="30" fill="#e7ddc6"/><ellipse cx="650" cy="1030" rx="340" ry="42" fill="#8b6b49"/><rect x="1640" y="995" width="700" height="280" rx="30" fill="#e7ddc6"/><ellipse cx="1990" cy="1003" rx="345" ry="42" fill="#8b6b49"/></g><rect x="112" y="50" width="2330" height="320" fill="#fcfbf6"/><rect x="905" y="285" width="975" height="150" rx="46" fill="#fcfbf6"/><circle cx="275" cy="195" r="152" fill="#5f7a58"/><circle cx="275" cy="195" r="132" fill="none" stroke="#86a07e" stroke-width="6"/><ellipse cx="275" cy="150" rx="30" ry="26" fill="#d19a62"/><circle cx="232" cy="122" r="13" fill="#d19a62"/><circle cx="262" cy="100" r="13" fill="#d19a62"/><circle cx="295" cy="100" r="13" fill="#d19a62"/><circle cx="322" cy="122" r="13" fill="#d19a62"/><text x="275" y="262" font-family="Liberation Sans,sans-serif" font-weight="bold" font-size="52" fill="#e8efe4" text-anchor="middle" textLength="170" lengthAdjust="spacingAndGlyphs">Dr. Finn</text><text x="275" y="305" font-family="Liberation Sans,sans-serif" font-size="28" fill="#cfdcc9" text-anchor="middle">The Vet</text><text x="525" y="270" font-family="Liberation Sans,sans-serif" font-weight="bold" font-size="258" fill="#4f4136" stroke="#4f4136" stroke-width="13" stroke-linejoin="round" textLength="1860" lengthAdjust="spacingAndGlyphs">SNOUT PAWS &amp; TAILS</text><text x="950" y="385" font-family="Liberation Sans,sans-serif" font-weight="bold" font-size="104" fill="#4f4136" stroke="#4f4136" stroke-width="6" stroke-linejoin="round" textLength="890" lengthAdjust="spacingAndGlyphs">GRAIN-FREE PET FOOD</text><circle cx="1268" cy="660" r="186" fill="#4a4a56" opacity=".78"/><path d="M1216 575 L1376 660 L1216 745 Z" fill="#fff" stroke="#fff" stroke-width="14" stroke-linejoin="round"/><rect x="430" y="1100" width="1730" height="175" fill="#6f8a62"/><text x="525" y="1232" font-family="Liberation Sans,sans-serif" font-weight="bold" font-size="142" fill="#f1f7ec" stroke="#f1f7ec" stroke-width="8" stroke-linejoin="round" textLength="1485" lengthAdjust="spacingAndGlyphs">THE VET'S HONEST REVIEW!</text><circle cx="2085" cy="1190" r="34" fill="none" stroke="#d7e4d0" stroke-width="9"/><path d="M2068 1190 L2082 1204 L2110 1168" fill="none" stroke="#d7e4d0" stroke-width="9"/></svg></div>
<div class="chip" style="left:1111.5px;top:1625.5px;width:91.5px;height:37px;"></div>
<div class="chip" style="left:1213.5px;top:1625.5px;width:119.5px;height:37px;"></div>
<div class="chip" style="left:1344px;top:1625.5px;width:176.5px;height:37px;"></div>
<div style="position:absolute;left:1123px;top:1632.5px;width:21.5px;height:22.5px;background:#fbe9dd;border-radius:5px;"></div>
<div class="t" style="left:1128.6px;top:1636.1px;font:bold 16px/1 'Liberation Sans',sans-serif;color:#a36b50;transform:scaleX(1.1933);transform-origin:0 0;">3</div>
<div class="t" style="left:1150.4px;top:1634.6px;font:18px/1 'Liberation Sans',sans-serif;color:#9a9a9a;letter-spacing:0.376px;transform:scaleX(1.0700);transform-origin:0 0;">High</div>
<svg style="position:absolute;left:1227.3px;top:1633.8px;" width="20" height="20" viewBox="0 0 20 20"><circle cx="10" cy="10" r="9.8" fill="#5068cc"/><circle cx="6.6" cy="8.2" r="1.5" fill="#fff"/><circle cx="13.4" cy="8.2" r="1.5" fill="#fff"/><path d="M5.2 11.6 H14.8 Q14.2 16.4 10 16.4 Q5.8 16.4 5.2 11.6 Z" fill="#fff"/><path d="M3 5.6 Q10 1.2 17 5.6" stroke="#dfe5ff" stroke-width="1.4" fill="none"/></svg>
<div class="t" style="left:1256.1px;top:1634.6px;font:18px/1 'Liberation Sans',sans-serif;color:#9a9a9a;transform:scaleX(1.0501);transform-origin:0 0;">Positive</div>
<svg style="position:absolute;left:1357.5px;top:1632.5px;" width="21" height="22" viewBox="0 0 21 22"><path d="M1 1 H20 V15.5 H8 L2.6 21 V15.5 H1 Z" fill="#262626"/><path d="M10.5 12.2 L6.3 8 Q5 5.6 7.4 4.7 Q9.3 4.3 10.5 6.2 Q11.7 4.3 13.6 4.7 Q16 5.6 14.7 8 Z" fill="#fff"/></svg>
<div class="t" style="left:1387.0px;top:1634.6px;font:18px/1 'Liberation Sans',sans-serif;color:#9a9a9a;transform:scaleX(1.0469);transform-origin:0 0;">Customer love</div>
<div style="position:absolute;left:1111px;top:1677px;width:1356px;height:76px;background:linear-gradient(90deg,#eeedf9 0%,#efedf9 70%,#f4effb 100%);border-radius:8px;"></div>
<svg style="position:absolute;left:1141.5px;top:1699.5px;" width="27" height="31" viewBox="0 0 27 31"><defs><linearGradient id="fl569" x1="0" y1="0" x2="1" y2="1"><stop offset="0" stop-color="#6f6ad6"/><stop offset="1" stop-color="#a77ee0"/></linearGradient></defs><path d="M11.2 1.6 C7 5.2 1.6 10.2 1.6 17.6 C1.6 24.4 6.6 29.4 13 29.4 C19.6 29.4 24.6 24.4 24.6 17.8 C24.6 13.4 22.6 10 19.8 7.6 C19 10.6 16.6 12.6 13.6 12.8 C13.8 8.6 13 4.6 11.2 1.6 Z" fill="none" stroke="url(#fl569)" stroke-width="2.3" stroke-linejoin="round"/></svg>
<div class="t" style="left:1186.9px;top:1704.8px;font:21px/1 'Liberation Sans',sans-serif;color:#555;transform:scaleX(1.0601);transform-origin:0 0;"><b style="color:#3a3a3a">Engage Now -</b> Vet endorsements drive strong trust signals—this is a major credibility moment.</div>
<svg style="position:absolute;left:2410.7px;top:1703.8px;" width="22" height="22" viewBox="0 0 22 22"><g stroke="#333" stroke-width="2.4" stroke-linecap="round"><line x1="1.5" y1="1.5" x2="20.5" y2="20.5"/><line x1="20.5" y1="1.5" x2="1.5" y2="20.5"/></g></svg>
<svg style="position:absolute;left:1127px;top:1778.5px;" width="30" height="27" viewBox="0 0 30 27"><path d="M12.6 1.8 L1.6 13 L12.6 24.4 V18.2 H16.5 Q22.5 18.2 24.6 23.6 H27.6 V18 Q27.6 7.8 17 7.8 H12.6 Z" fill="none" stroke="#5a5a5a" stroke-width="2.2" stroke-linejoin="round"/></svg>
<div class="t" style="left:1167.5px;top:1782.5px;font:20px/1 'Liberation Sans',sans-serif;color:#7a7a7a;transform:scaleX(1.0554);transform-origin:0 0;">Reply</div>
<svg style="position:absolute;left:1266px;top:1778.5px;" width="30" height="27" viewBox="0 0 30 27"><path d="M15 25 L3.6 13.6 C0.2 10.2 1.2 4.6 5.6 2.8 C9.2 1.4 13 3 15 6.6 C17 3 20.8 1.4 24.4 2.8 C28.8 4.6 29.8 10.2 26.4 13.6 Z" fill="none" stroke="#5a5a5a" stroke-width="2.3" stroke-linejoin="round"/></svg>
<div class="t" style="left:1305.6px;top:1782.5px;font:20px/1 'Liberation Sans',sans-serif;color:#7a7a7a;letter-spacing:0.821px;transform:scaleX(1.0700);transform-origin:0 0;">Like</div>
<svg style="position:absolute;left:2021px;top:1780.5px;" width="31" height="23" viewBox="0 0 31 23"><path d="M1.6 1.6 H29.4 V7.6 Q25 11.5 29.4 15.4 V21.4 H1.6 V15.4 Q6.6 11.5 1.6 7.6 Z" fill="none" stroke="#5a5a5a" stroke-width="2.3" stroke-linejoin="round"/><line x1="18.5" y1="5" x2="18.5" y2="18.5" stroke="#5a5a5a" stroke-width="2.3" stroke-dasharray="3 3.6"/></svg>
<div class="t" style="left:2062.8px;top:1782.5px;font:20px/1 'Liberation Sans',sans-serif;color:#7a7a7a;letter-spacing:0.364px;transform:scaleX(1.0700);transform-origin:0 0;">Assign to</div>
<svg style="position:absolute;left:2198.5px;top:1778px;" width="29" height="29" viewBox="0 0 29 29"><path d="M2.2 5 Q2.2 2.2 5 2.2 H12.6 Q14 2.2 15 3.2 L25.8 14 Q27.4 15.6 25.8 17.2 L17.2 25.8 Q15.6 27.4 14 25.8 L3.2 15 Q2.2 14 2.2 12.6 Z" fill="none" stroke="#5a5a5a" stroke-width="2.2" stroke-linejoin="round"/><circle cx="8.6" cy="8.6" r="1.7" fill="#5a5a5a"/></svg>
<div class="t" style="left:2239.9px;top:1782.5px;font:20px/1 'Liberation Sans',sans-serif;color:#7a7a7a;transform:scaleX(1.0488);transform-origin:0 0;">Tag</div>
<svg style="position:absolute;left:2318.5px;top:1777.5px;" width="29" height="29" viewBox="0 0 29 29"><circle cx="14.5" cy="14.5" r="12.9" fill="none" stroke="#5a5a5a" stroke-width="2.2"/><path d="M8.8 15 L12.8 19 L20.4 10.6" fill="none" stroke="#5a5a5a" stroke-width="2.3" stroke-linecap="round" stroke-linejoin="round"/></svg>
<div class="t" style="left:2358.7px;top:1782.5px;font:20px/1 'Liberation Sans',sans-serif;color:#7a7a7a;letter-spacing:0.592px;transform:scaleX(1.0700);transform-origin:0 0;">Complete</div>
<div class="card" style="left:2541.5px;top:728.3px;width:543.5px;height:494px;"></div>
<svg style="position:absolute;left:2949.6px;top:749.8px;" width="31" height="30" viewBox="0 0 31 30"><path d="M7 1.9 H25 Q29.2 1.9 29.2 6 V20 L22.6 28 H6 Q1.9 28 1.9 24 V7.2 Z" fill="none" stroke="#444" stroke-width="2.3" stroke-linejoin="round"/><path d="M8.2 10.6 H12.8" stroke="#444" stroke-width="2" stroke-linecap="round"/><path d="M17 11.2 Q19.6 8.2 22.8 10.4" fill="none" stroke="#444" stroke-width="2" stroke-linecap="round"/><path d="M8.6 17.4 Q15 23.4 21.6 17" fill="none" stroke="#444" stroke-width="2.1" stroke-linecap="round"/></svg>
<svg style="position:absolute;left:3016.4px;top:760.8px;" width="28" height="7" viewBox="0 0 28 7"><circle cx="3" cy="3.5" r="2.5" fill="#444"/><circle cx="13.6" cy="3.5" r="2.5" fill="#444"/><circle cx="24.2" cy="3.5" r="2.5" fill="#444"/></svg>
<div class="t" style="left:2750.6px;top:816.2px;font:17.5px/1 'Liberation Sans',sans-serif;color:#7c7c7c;letter-spacing:0.475px;transform:scaleX(1.0700);transform-origin:0 0;">Trellis Insights</div>
<div class="t" style="left:2653.2px;top:859.2px;font:bold 25px/1 'Liberation Sans',sans-serif;color:#333;letter-spacing:0.342px;transform:scaleX(1.0700);transform-origin:0 0;">Itchy skin’ mentions are</div>
<div class="t" style="left:2699.2px;top:897.0px;font:bold 25px/1 'Liberation Sans',sans-serif;color:#333;letter-spacing:0.262px;transform:scaleX(1.0700);transform-origin:0 0;"><span style="background:linear-gradient(90deg,#4c5bd4 0%,#7b6ddb 45%,#b08ee2 100%);-webkit-background-clip:text;background-clip:text;color:transparent;">up 34%</span> this week</div>
<div style="position:absolute;left:2565.8px;top:955.7px;width:495.2px;height:154.3px;box-sizing:border-box;border:1.5px solid #efefef;border-radius:10px;background:#fff;box-shadow:0 1px 3px rgba(0,0,0,.04);"></div>
<div class="t" style="left:2582.0px;top:974.3px;font:18px/1 'Liberation Sans',sans-serif;color:#444;letter-spacing:0.308px;-webkit-text-stroke:0.45px #444;transform:scaleX(1.0700);transform-origin:0 0;">Itchy-skin rise among cat owners</div>
<div class="t" style="left:2582.9px;top:1016.6px;font:17px/1 'Liberation Sans',sans-serif;color:#777;letter-spacing:0.277px;transform:scaleX(1.0700);transform-origin:0 0;">+11% this week, driven by winter dryness, grooming</div>
<div class="t" style="left:2582.6px;top:1046.0px;font:17px/1 'Liberation Sans',sans-serif;color:#777;letter-spacing:0.393px;transform:scaleX(1.0700);transform-origin:0 0;">posts, and viral hairball-remedy content. Sentiment</div>
<div class="t" style="left:2582.9px;top:1075.2px;font:17px/1 'Liberation Sans',sans-serif;color:#777;transform:scaleX(1.0404);transform-origin:0 0;">+0.07.</div>
<div style="position:absolute;left:2564px;top:1135.5px;width:498px;height:66px;box-sizing:border-box;border:2.5px solid #d3cff0;border-radius:8px;background:#fff;box-shadow:0 3px 8px rgba(140,125,220,.22);"></div>
<svg style="position:absolute;left:2580px;top:1152px;" width="32" height="32" viewBox="0 0 32 32"><path d="M21.4 19.2 A10.6 10.6 0 1 1 14.6 4.8" fill="none" stroke="#444" stroke-width="2.4" stroke-linecap="round"/><line x1="21.4" y1="21.4" x2="28.6" y2="28.6" stroke="#444" stroke-width="2.6" stroke-linecap="round"/><path d="M22.7 1.4 Q23.8 7.9 30.2 9 Q23.8 10.1 22.7 16.6 Q21.6 10.1 15.2 9 Q21.6 7.9 22.7 1.4 Z" fill="#fff" stroke="#444" stroke-width="2.2" stroke-linejoin="round"/></svg>
<div class="t" style="left:2624.9px;top:1160.0px;font:17px/1 'Liberation Sans',sans-serif;color:#a0a0a0;letter-spacing:0.372px;transform:scaleX(1.0700);transform-origin:0 0;">Explore this trend for more actions</div>
<div class="card" style="left:2541.5px;top:1256.7px;width:543.5px;height:415px;"></div>
<svg style="position:absolute;left:2949.6px;top:1277.2px;" width="31" height="30" viewBox="0 0 31 30"><path d="M7 1.9 H25 Q29.2 1.9 29.2 6 V20 L22.6 28 H6 Q1.9 28 1.9 24 V7.2 Z" fill="none" stroke="#444" stroke-width="2.3" stroke-linejoin="round"/><path d="M8.2 10.6 H12.8" stroke="#444" stroke-width="2" stroke-linecap="round"/><path d="M17 11.2 Q19.6 8.2 22.8 10.4" fill="none" stroke="#444" stroke-width="2" stroke-linecap="round"/><path d="M8.6 17.4 Q15 23.4 21.6 17" fill="none" stroke="#444" stroke-width="2.1" stroke-linecap="round"/></svg>
<svg style="position:absolute;left:3016.4px;top:1288.2px;" width="28" height="7" viewBox="0 0 28 7"><circle cx="3" cy="3.5" r="2.5" fill="#444"/><circle cx="13.6" cy="3.5" r="2.5" fill="#444"/><circle cx="24.2" cy="3.5" r="2.5" fill="#444"/></svg>
<div class="t" style="left:2750.6px;top:1343.4px;font:17.5px/1 'Liberation Sans',sans-serif;color:#7c7c7c;letter-spacing:0.475px;transform:scaleX(1.0700);transform-origin:0 0;">Trellis Insights</div>
<div class="t" style="left:2606.1px;top:1386.4px;font:bold 25px/1 'Liberation Sans',sans-serif;color:#333;letter-spacing:0.224px;transform:scaleX(1.0700);transform-origin:0 0;">Three pet creators <span style="background:linear-gradient(90deg,#4c5bd4 0%,#7b6ddb 45%,#b08ee2 100%);-webkit-background-clip:text;background-clip:text;color:transparent;">drove 58%</span> of</div>
<div class="t" style="left:2583.2px;top:1425.1px;font:bold 25px/1 'Liberation Sans',sans-serif;color:#333;letter-spacing:0.113px;transform:scaleX(1.0700);transform-origin:0 0;">positive reach yesterday — one is a</div>
<div class="t" style="left:2581.6px;top:1464.0px;font:bold 25px/1 'Liberation Sans',sans-serif;color:#333;letter-spacing:0.258px;transform:scaleX(1.0700);transform-origin:0 0;">small-animal influencer you haven’t</div>
<div class="t" style="left:2687.9px;top:1502.6px;font:bold 25px/1 'Liberation Sans',sans-serif;color:#333;letter-spacing:0.700px;transform:scaleX(1.0700);transform-origin:0 0;">partnered with yet.</div>
<div style="position:absolute;left:2564px;top:1585px;width:498px;height:65.5px;box-sizing:border-box;border:2.5px solid #d3cff0;border-radius:8px;background:#fff;box-shadow:0 3px 8px rgba(140,125,220,.22);"></div>
<svg style="position:absolute;left:2581px;top:1603px;" width="32" height="30" viewBox="0 0 32 30"><path d="M6.4 2.6 H25.6 L30 12 L16 27.6 L2 12.4 Z" fill="none" stroke="#444" stroke-width="2.5" stroke-linejoin="round"/><line x1="10.2" y1="9.6" x2="14.6" y2="16.4" stroke="#444" stroke-width="2.3" stroke-linecap="round"/></svg>
<div class="t" style="left:2625.5px;top:1610.0px;font:17px/1 'Liberation Sans',sans-serif;color:#a0a0a0;letter-spacing:0.425px;transform:scaleX(1.0700);transform-origin:0 0;">Consider adding them to your priority watch list.</div>
<div class="card" style="left:2541.5px;top:1702px;width:543.5px;height:200px;"></div>
</div></div>
</body></html>
